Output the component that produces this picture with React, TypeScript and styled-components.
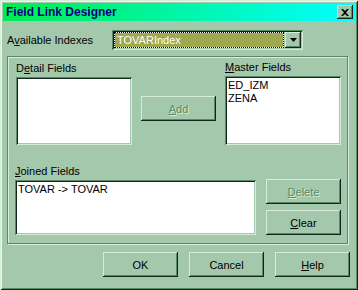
import React from 'react';
import styled, { createGlobalStyle } from 'styled-components';

const c = {
  face: '#a4c8ac',
  light: '#d6eed9',
  white: '#e8f8ea',
  shadow: '#5a8a64',
  dark: '#10281a',
  select: '#a0a850',
  title: '#000080',
};

const GlobalStyle = createGlobalStyle`
  html, body {
    margin: 0;
    padding: 0;
    background: ${c.face};
  }
`;

const Window = styled.div`
  width: 358px;
  height: 290px;
  box-sizing: border-box;
  padding: 3px;
  display: flex;
  flex-direction: column;
  background: ${c.face};
  box-shadow: inset 1px 1px 0 ${c.light}, inset -1px -1px 0 ${c.dark},
    inset 2px 2px 0 ${c.white}, inset -2px -2px 0 ${c.shadow};
  font: 11px 'Liberation Sans', Arial, sans-serif;
  color: #000;
`;

const TitleBar = styled.div`
  height: 18px;
  display: flex;
  align-items: center;
  justify-content: space-between;
  padding: 0 2px 0 3px;
  background: linear-gradient(to right, #00ec50, #00ffff);
`;

const Title = styled.div`
  font-weight: bold;
  font-size: 12px;
  color: ${c.title};
`;

const raised = `
  background: ${c.face};
  box-shadow: inset -1px -1px 0 ${c.dark}, inset 1px 1px 0 ${c.light},
    inset -2px -2px 0 ${c.shadow};
`;

const sunken = `
  box-shadow: inset 1px 1px 0 ${c.shadow}, inset -1px -1px 0 ${c.light},
    inset 2px 2px 0 ${c.dark}, inset -2px -2px 0 ${c.face};
`;

const CloseButton = styled.div`
  width: 16px;
  height: 14px;
  display: flex;
  align-items: center;
  justify-content: center;
  ${raised}
`;

const Body = styled.div`
  flex: 1;
  display: flex;
  flex-direction: column;
  padding: 9px 5px 0 4px;
`;

const IndexRow = styled.div`
  display: flex;
  align-items: center;
  height: 20px;
`;

const IndexLabel = styled.div`
  width: 105px;
`;

const Combo = styled.div`
  width: 191px;
  height: 20px;
  box-sizing: border-box;
  padding: 2px;
  display: flex;
  background: ${c.face};
  ${sunken}
`;

const ComboField = styled.div`
  flex: 1;
  margin-right: 1px;
  box-sizing: border-box;
  padding-left: 2px;
  display: flex;
  align-items: center;
  color: #fff;
  border: 1px dotted #000;
  background: linear-gradient(${c.select}, ${c.select}) padding-box, #fff;
`;

const DropButton = styled.div`
  width: 16px;
  height: 16px;
  display: flex;
  align-items: center;
  justify-content: center;
  ${raised}
`;

const Group = styled.div`
  margin-top: 6px;
  width: 341px;
  height: 188px;
  box-sizing: border-box;
  border: 1px solid ${c.shadow};
  box-shadow: inset 1px 1px 0 ${c.light}, 1px 1px 0 ${c.light};
  padding: 5px 0 0 8px;
  display: flex;
  flex-direction: column;
`;

const Row = styled.div`
  display: flex;
`;

const Column = styled.div<{ $ml?: number; $mt?: number }>`
  display: flex;
  flex-direction: column;
  margin-left: ${(p) => p.$ml ?? 0}px;
  margin-top: ${(p) => p.$mt ?? 0}px;
`;

const FieldLabel = styled.div`
  height: 13px;
  line-height: 13px;
  margin-bottom: 2px;
`;

const ListBox = styled.div<{ $w: number; $h: number }>`
  width: ${(p) => p.$w}px;
  height: ${(p) => p.$h}px;
  box-sizing: border-box;
  padding: 3px 3px;
  background: #fff;
  ${sunken}
`;

const ListItem = styled.div`
  line-height: 13px;
  white-space: pre;
`;

const Button = styled.div<{ $disabled?: boolean }>`
  width: 75px;
  height: 25px;
  display: flex;
  align-items: center;
  justify-content: center;
  ${raised}
  color: ${(p) => (p.$disabled ? c.shadow : '#000')};
  text-shadow: ${(p) => (p.$disabled ? `1px 1px 0 ${c.light}` : 'none')};
`;

const ButtonStack = styled.div`
  display: flex;
  flex-direction: column;
  gap: 6px;
`;

const Footer = styled.div`
  display: flex;
  justify-content: flex-end;
  gap: 11px;
  margin-top: 8px;
`;

const Key = styled.span`
  text-decoration: underline;
`;

const App = () => {
  return (
    <>
      <GlobalStyle />
      <Window>
        <TitleBar>
          <Title>Field Link Designer</Title>
          <CloseButton>
            <svg width="8" height="7" viewBox="0 0 8 7">
              <path d="M0 0h2l2 2 2-2h2L5 3.5 8 7H6L4 5 2 7H0l3-3.5z" fill="#000" />
            </svg>
          </CloseButton>
        </TitleBar>
        <Body>
          <IndexRow>
            <IndexLabel>
              A<Key>v</Key>ailable Indexes
            </IndexLabel>
            <Combo>
              <ComboField>TOVARIndex</ComboField>
              <DropButton>
                <svg width="7" height="4" viewBox="0 0 7 4">
                  <path d="M0 0h7L3.5 4z" fill="#000" />
                </svg>
              </DropButton>
            </Combo>
          </IndexRow>

          <Group>
            <Row>
              <Column>
                <FieldLabel>
                  D<Key>e</Key>tail Fields
                </FieldLabel>
                <ListBox $w={116} $h={68} />
              </Column>
              <Column $ml={9} $mt={34}>
                <Button $disabled>
                  <Key>A</Key>dd
                </Button>
              </Column>
              <Column $ml={9} $mt={-1}>
                <FieldLabel>
                  <Key>M</Key>aster Fields
                </FieldLabel>
                <ListBox $w={116} $h={69}>
                  <ListItem>ED_IZM</ListItem>
                  <ListItem>ZENA</ListItem>
                </ListBox>
              </Column>
            </Row>
            <Row>
              <Column $ml={-1} $mt={20}>
                <FieldLabel>
                  <Key>J</Key>oined Fields
                </FieldLabel>
                <ListBox $w={241} $h={55}>
                  <ListItem>TOVAR -&gt; TOVAR</ListItem>
                </ListBox>
              </Column>
              <Column $ml={10} $mt={34}>
                <ButtonStack>
                  <Button $disabled>
                    <Key>D</Key>elete
                  </Button>
                  <Button>
                    <Key>C</Key>lear
                  </Button>
                </ButtonStack>
              </Column>
            </Row>
          </Group>

          <Footer>
            <Button>OK</Button>
            <Button>Cancel</Button>
            <Button>
              <Key>H</Key>elp
            </Button>
          </Footer>
        </Body>
      </Window>
    </>
  );
};

export default App;
